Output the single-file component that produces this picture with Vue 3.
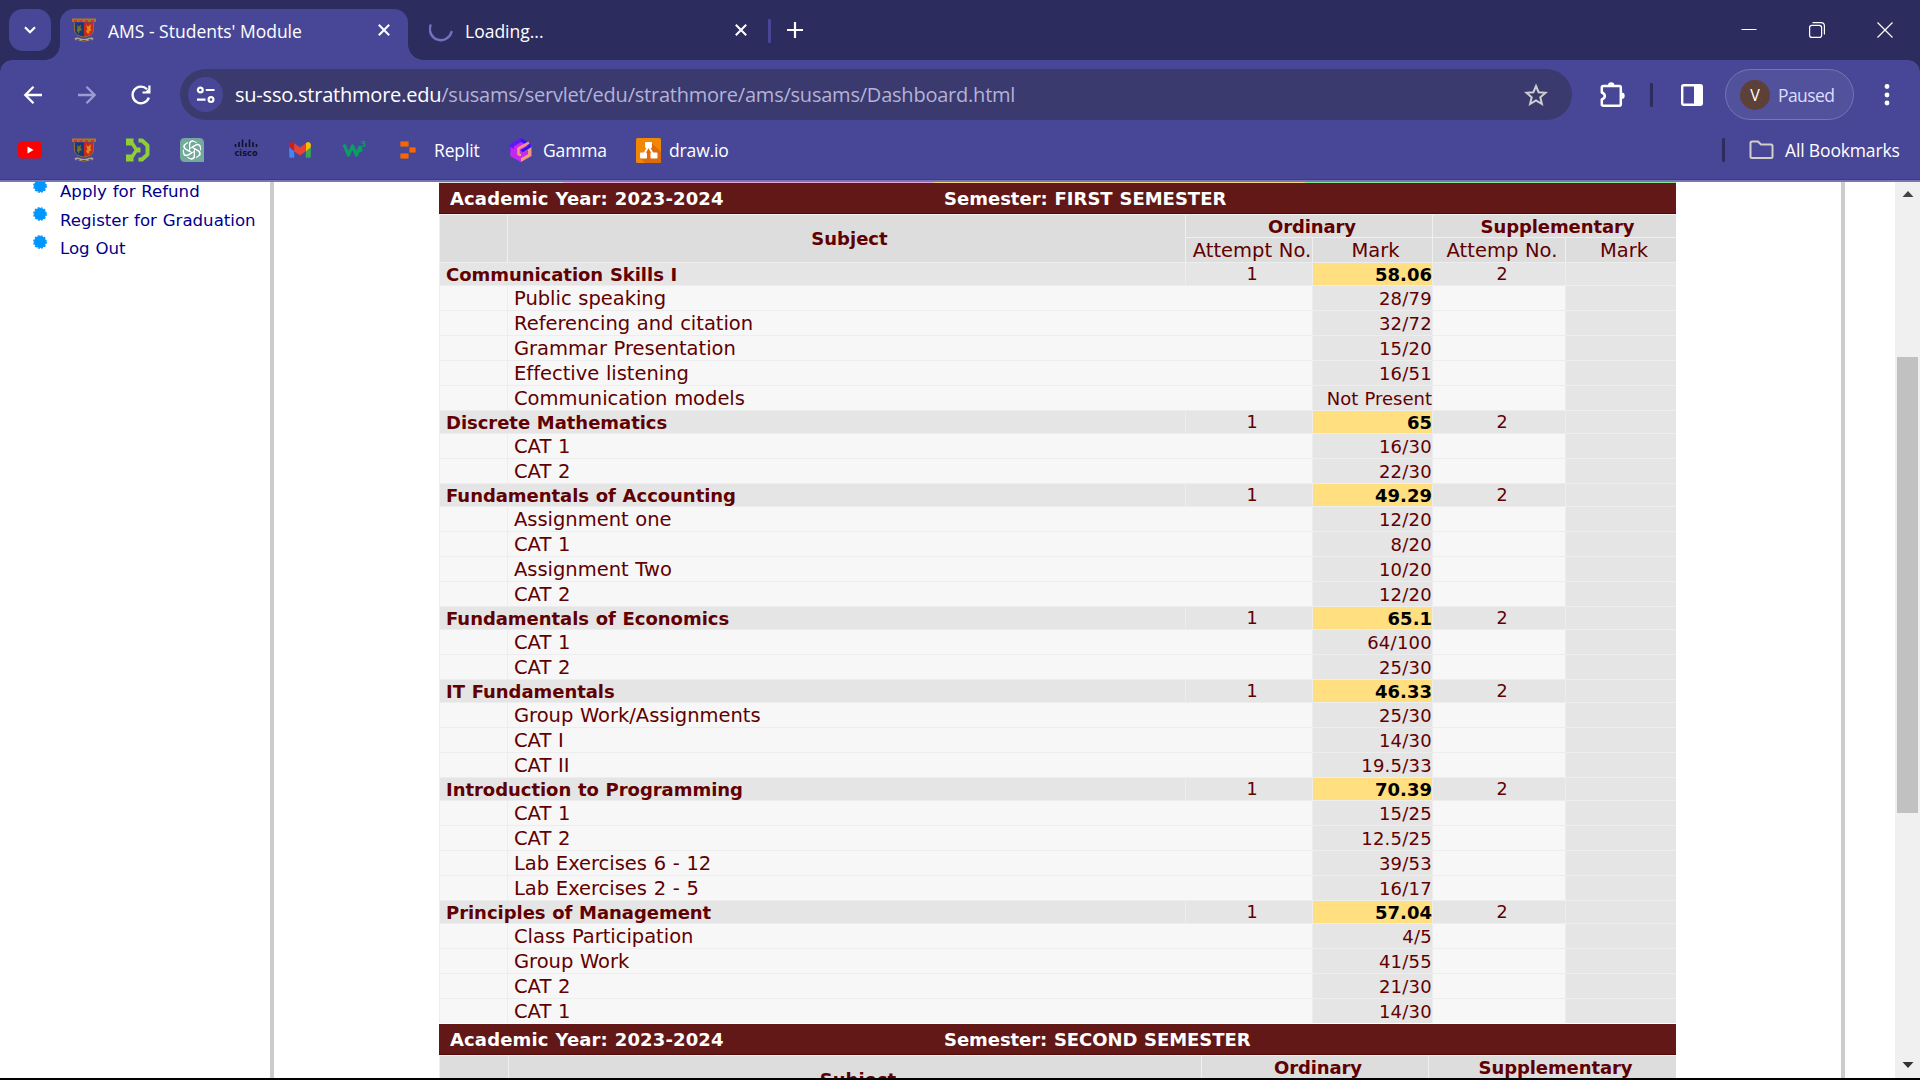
<script setup>
const subjects = [
  { name: 'Communication Skills I', mark: '58.06', parts: [['Public speaking', '28/79'], ['Referencing and citation', '32/72'], ['Grammar Presentation', '15/20'], ['Effective listening', '16/51'], ['Communication models', 'Not Present']] },
  { name: 'Discrete Mathematics', mark: '65', parts: [['CAT 1', '16/30'], ['CAT 2', '22/30']] },
  { name: 'Fundamentals of Accounting', mark: '49.29', parts: [['Assignment one', '12/20'], ['CAT 1', '8/20'], ['Assignment Two', '10/20'], ['CAT 2', '12/20']] },
  { name: 'Fundamentals of Economics', mark: '65.1', parts: [['CAT 1', '64/100'], ['CAT 2', '25/30']] },
  { name: 'IT Fundamentals', mark: '46.33', parts: [['Group Work/Assignments', '25/30'], ['CAT I', '14/30'], ['CAT II', '19.5/33']] },
  { name: 'Introduction to Programming', mark: '70.39', parts: [['CAT 1', '15/25'], ['CAT 2', '12.5/25'], ['Lab Exercises 6 - 12', '39/53'], ['Lab Exercises 2 - 5', '16/17']] },
  { name: 'Principles of Management', mark: '57.04', parts: [['Class Participation', '4/5'], ['Group Work', '41/55'], ['CAT 2', '21/30'], ['CAT 1', '14/30']] }
]
const links = ['Apply for Refund', 'Register for Graduation', 'Log Out']
</script>

<template>
  <div class="window">
    <svg width="0" height="0" class="defs">
      <symbol id="crest" viewBox="0 0 24 24">
        <path d="M0 .5h24v3.500H0z" fill="#a87a1c" />
        <path d="M2 2h3v2H2zM7.500 2h3v2h-3zM13 2h3v2h-3zM19 2h3v2h-3z" fill="#e0302a" />
        <path d="M2.500 4.500H12V19Q3 18 2.500 13z" fill="#173a7c" />
        <path d="M12 4.500h9.500V13Q21 18 12 19z" fill="#c9291d" />
        <path d="M5 7l2 1.500L9 6.500 8.500 10l1.500 2-2.500 1-.5 3-1.500-2.500L4.500 12l1-1.500z" fill="#77702c" />
        <path d="M14 7l2 1.500 3-2-.5 4 1 2-2.500 1 .5 2.500-2.500-1-1-2 1.500-1.500z" fill="#e08a1a" />
        <path d="M2.500 4.500v8.500q1 5 9.500 6 8.500-1 9.500-6V4.500" fill="none" stroke="#8a6d3c" stroke-width="1" />
        <path d="M2.500 20q3-1.200 5.500.3 4 1.200 8 0 3-1.500 5.500-.3l-1 2.200q-3-.5-4.500.5-4 1-8 0-2-1-4.500-.5z" fill="#b0a68e" />
        <path d="M4.500 21.500h3m2 1h5m2-1h3" stroke="#7c5a1a" stroke-width="1.200" />
      </symbol>
      <symbol id="cross" viewBox="0 0 12 12"><path d="M.8.8l10.400 10.400M11.200.8L.8 11.200" stroke="#fff" stroke-width="2" fill="none" /></symbol>
    </svg>

    <header class="strip">
      <button class="search"><svg width="12" height="8" viewBox="0 0 12 8"><path d="M1 1.200l5 5 5-5" fill="none" stroke="#fff" stroke-width="2.200" /></svg></button>
      <div class="tab active">
        <svg class="fav" width="24" height="24"><use href="#crest" /></svg>
        <span class="title">AMS - Students' Module</span>
        <svg class="x" width="12" height="12"><use href="#cross" /></svg>
      </div>
      <div class="tab idle">
        <svg width="24" height="24" viewBox="0 0 24 24" class="spin"><path d="M1.500 7.500A11 11 0 1 0 22.500 14" fill="none" stroke="#7472c0" stroke-width="2.400" stroke-linecap="round" /></svg>
        <span class="title">Loading...</span>
        <svg class="x" width="12" height="12"><use href="#cross" /></svg>
      </div>
      <i class="tabsep"></i>
      <svg class="plus" width="16" height="16" viewBox="0 0 16 16"><path d="M8 0v16M0 8h16" stroke="#fff" stroke-width="2.200" /></svg>
      <div class="controls">
        <svg width="16" height="16" viewBox="0 0 16 16"><path d="M.5 7.500H15.500" stroke="#fff" /></svg>
        <svg width="16" height="16" viewBox="0 0 16 16"><rect x=".6" y="3.400" width="12" height="12" rx="2.200" fill="none" stroke="#fff" stroke-width="1.200" /><path d="M3.500.6H12q3.400 0 3.400 3.400v8.500" fill="none" stroke="#fff" stroke-width="1.200" /></svg>
        <svg width="16" height="16" viewBox="0 0 16 16"><path d="M.5.5l15 15M15.500.5l-15 15" stroke="#fff" stroke-width="1.200" /></svg>
      </div>
    </header>

    <div class="chrome">
      <div class="toolbar">
        <svg class="back" width="20" height="20" viewBox="0 0 20 20"><path d="M19 10H3M10.500 1.800L2.300 10l8.200 8.200" fill="none" stroke="#fff" stroke-width="2.300" /></svg>
        <svg class="fwd" width="20" height="20" viewBox="0 0 20 20"><path d="M1 10h16M9.500 1.800l8.200 8.200-8.200 8.200" fill="none" stroke="#9c9bd2" stroke-width="2.300" /></svg>
        <svg class="reload" width="20" height="20" viewBox="0 0 20 20"><path d="M17.800 12.600A8.300 8.300 0 1 1 16 4.200" fill="none" stroke="#fff" stroke-width="2.400" /><path d="M19.500.6v8h-8v-2.200h3.200l2.600-2.600V.6z" fill="#fff" /></svg>
        <div class="omnibox">
          <span class="site"><svg width="20" height="18" viewBox="0 0 20 18"><g fill="none" stroke="#fff" stroke-width="2.200"><circle cx="4.300" cy="4" r="2.400" /><path d="M9.800 4H18.500M1 13.600h8.500" /><circle cx="15" cy="13.600" r="2.400" /></g></svg></span>
          <span class="url"><b>su-sso.strathmore.edu</b>/susams/servlet/edu/strathmore/ams/susams/Dashboard.html</span>
          <svg class="star" width="24" height="24" viewBox="0 0 24 24"><path d="M12 3l2.600 6.200 6.900.6-5.200 4.500 1.600 6.700L12 17.400 6.100 21l1.600-6.700L2.500 9.800l6.900-.6z" fill="none" stroke="#cfcfcf" stroke-width="2" /></svg>
        </div>
        <svg class="puzzle" width="26" height="26" viewBox="0 0 26 26"><path d="M2.800 5.500q0-1.500 1.500-1.500h16q1.500 0 1.500 1.500v16.800q0 1.500-1.500 1.500h-16q-1.500 0-1.500-1.500v-4.800q3-1.200 3-3.500t-3-3.500z" fill="none" stroke="#fff" stroke-width="2.500" stroke-linejoin="round" /><path d="M9 3.500a3.200 3.200 0 0 1 6.400 0zM22.500 10.500a3.200 3.200 0 0 1 0 6.400z" fill="#fff" /></svg>
        <i class="vsep"></i>
        <svg class="panel" width="24" height="24" viewBox="0 0 24 24"><rect x="2.200" y="2.200" width="19.600" height="19.600" rx="1.500" fill="none" stroke="#fff" stroke-width="2.400" /><path d="M14 2h8v20h-8z" fill="#fff" /></svg>
        <div class="profile"><span class="avatar">V</span><span class="paused">Paused</span></div>
        <svg class="dots" width="6" height="24" viewBox="0 0 6 24"><g fill="#fff"><circle cx="3" cy="3.500" r="2.400" /><circle cx="3" cy="12" r="2.400" /><circle cx="3" cy="20" r="2.400" /></g></svg>
      </div>

      <nav class="bookmarks">
        <svg width="24" height="24" viewBox="0 0 24 24"><rect y="3.500" width="24" height="17" rx="4" fill="#f00" /><path d="M9.500 8.500v7l6-3.500z" fill="#fff" /></svg>
        <svg width="24" height="24"><use href="#crest" /></svg>
        <svg width="24" height="24" viewBox="0 0 24 24"><path d="M0 .5h7.500V4l3.500 5.500h3.500v5H11L7.500 20v3.500H0v-7h5.500L8.500 12l-3-4.500H0z" fill="#8fce35" /><path d="M12.500 2.500H16l5.500 5v9l-5.500 5h-3.500" fill="none" stroke="#8fce35" stroke-width="4" stroke-linejoin="round" /></svg>
        <svg width="24" height="24" viewBox="0 0 24 24"><path d="M5 0h14q5 0 5 5v19H5q-5 0-5-5V5q0-5 5-5z" fill="#74aa9c" />
          <g fill="none" stroke="#fff" stroke-width="1.100"><path v-for="n in 6" :key="n" :transform="`rotate(${n * 60} 12 12)`" d="M9.600 13.400V7q0-3.300 3.100-3.700 2.300-.2 3.700 1.500M12 9.200l5-2.900q2.500-.4 3.700 2.200" /></g></svg>
        <svg class="cisco" width="24" height="24" viewBox="0 0 24 24"><path d="M1.500 6v3M5 4v5M8.500 1.500V9M12 5v4M15.500 1.500V9M19 4v5M22.500 6v3" stroke="#11112c" stroke-width="1.600" /><text x=".5" y="17.500" font-size="9.500" textLength="23" lengthAdjust="spacingAndGlyphs" fill="#11112c">cisco</text></svg>
        <svg width="24" height="24" viewBox="0 0 24 24"><path d="M1.200 6v12.500q0 1.300 1.300 1.300h3.700V9.500z" fill="#4285f4" /><path d="M22.800 6v12.500q0 1.300-1.300 1.300h-3.700V9.500z" fill="#34a853" /><path d="M17.800 5.200q3-2.600 5 .8v3.300l-5 4z" fill="#fbbc04" /><path d="M6.200 5.200q-3-2.600-5 .8v3.300l5 4z" fill="#c5221f" /><path d="M6.200 5.200L12 9.600l5.800-4.400v8.100L12 17.600l-5.800-4.300z" fill="#ea4335" /></svg>
        <svg class="w3" width="24" height="24" viewBox="0 0 24 24"><path d="M2 6.500L6.500 17 10.500 8 14.500 17 17.800 9.500 19.500 13.500" fill="none" stroke="#0a9e62" stroke-width="3.200" stroke-linejoin="round" /><text x="19" y="8.500" font-size="8.500" fill="#0a9e62">3</text></svg>
        <svg width="24" height="24" viewBox="0 0 24 24"><path d="M5 3h8v6H5q-1 0-1-1V4q0-1 1-1zM13 9h6q1 0 1 1v4q0 1-1 1h-6zM4 16q0-1 1-1h8v5q0 1-1 1H5q-1 0-1-1z" fill="#fb6400" stroke="#2c4c9c" stroke-width=".7" /></svg>
        <span class="bm replit">Replit</span>
        <svg class="gamma" width="24" height="24" viewBox="0 0 24 24"><path d="M12 0l10.500 6v12L12 24 1.500 18V6z" fill="#c529f0" /><path d="M12 0L22.500 6v12L12 24V20l7-4v-4l-5 3v-4l5-3-7-4.300L5 8v8L1.500 14V6z" fill="#3113f4" /><path d="M1.500 6L12 0v4L5 8v8.500L1.500 14.500z" fill="#5a1cf5" /><path d="M14 11l8.500-4.700V18L12 24v-4l7-4v-4l-5 3z" fill="#f0977c" /><path d="M20 4.600L9.500 10.500v5.500L12 17.500" fill="none" stroke="#f0977c" stroke-width="2.600" /><path d="M11.500 12l11-6v3L14 14.500z" fill="#3113f4" /><path d="M1.500 9l3.500 2v5.500L12 20v4L1.500 18z" fill="#c529f0" /></svg>
        <span class="bm gtext">Gamma</span>
        <svg class="drawio" width="25" height="25" viewBox="0 0 25 25"><rect width="25" height="25" rx="1.500" fill="#f08705" /><path d="M15 4.500L25 14v9.500q0 1.500-1.500 1.500H9l-5-5 8-8z" fill="#df6c0c" /><path d="M12 9l-5 9M13 9l5 9" stroke="#fff" stroke-width="1.800" /><rect x="9" y="4" width="7" height="6" rx="1" fill="#fff" /><rect x="4" y="14.500" width="7" height="6" rx="1" fill="#fff" /><rect x="14.500" y="14.500" width="7" height="6" rx="1" fill="#fff" /></svg>
        <span class="bm">draw.io</span>
        <i class="vsep bsep"></i>
        <svg class="folder" width="25" height="20" viewBox="0 0 25 20"><path d="M1.500 3q0-1.500 1.500-1.500h6l3 3h10q1.500 0 1.500 1.500v10.500q0 1.500-1.500 1.500H3q-1.500 0-1.500-1.500z" fill="none" stroke="#d0d0c8" stroke-width="2" /></svg>
        <span class="bm all">All Bookmarks</span>
      </nav>
    </div>

    <div class="page">
      <aside>
        <div v-for="l in links" :key="l" class="link">
          <svg width="14" height="14" viewBox="0 0 14 14"><circle cx="7" cy="7" r="6" fill="#0096ff" /><circle cx="7" cy="7" r="6.200" fill="none" stroke="#0096ff" stroke-width="1.400" stroke-dasharray="1.950 1.300" /></svg>
          <a>{{ l }}</a>
        </div>
      </aside>
      <i class="rule"></i>
      <main>
        <div class="accent"><i></i><i></i><i></i><i></i></div>
        <div class="banner"><span>Academic Year: 2023-2024</span><span>Semester: FIRST SEMESTER</span></div>
        <div class="head">
          <div></div><div class="h subj">Subject</div>
          <div class="h wide">Ordinary</div><div class="h wide">Supplementary</div>
          <div class="c">Attempt No.</div><div class="c">Mark</div><div class="c">Attemp No.</div><div class="c">Mark</div>
        </div>
        <template v-for="s in subjects" :key="s.name">
          <div class="row subject">
            <div class="name">{{ s.name }}</div><div class="no">1</div><div class="gold">{{ s.mark }}</div><div class="no">2</div><div></div>
          </div>
          <div v-for="p in s.parts" :key="p[0]" class="row part">
            <div></div><div class="label">{{ p[0] }}</div><div class="mark" :class="{ absent: !p[1].includes('/') }">{{ p[1] }}</div><div></div><div class="shade"></div>
          </div>
        </template>
        <div class="banner second"><span>Academic Year: 2023-2024</span><span>Semester: SECOND SEMESTER</span></div>
        <div class="head next">
          <div></div><div class="h subj">Subject</div>
          <div class="h wide">Ordinary</div><div class="h wide">Supplementary</div>
        </div>
      </main>
      <i class="rule"></i>
      <div class="scroll">
        <svg width="12" height="6" viewBox="0 0 12 6"><path d="M.5 6L6 0l5.500 6z" fill="#444" /></svg>
        <i class="thumb"></i>
        <svg class="down" width="12" height="6" viewBox="0 0 12 6"><path d="M.5 0L6 6l5.500-6z" fill="#333" /></svg>
      </div>
    </div>
  </div>
</template>

<style>
body { background: #000; overflow: hidden; }
</style>

<style scoped>
* { box-sizing: border-box; }
svg { display: block; flex: none; }
.defs { position: absolute; }
.window { width: 1920px; height: 1080px; overflow: hidden; display: flex; flex-direction: column; background: #000; font-family: "Open Sans", "Noto Sans", sans-serif; font-size: 17.5px; color: #fff; white-space: nowrap; }
.strip { height: 60px; flex: none; background: #2d2c5e; display: flex; align-items: flex-end; }
.search { width: 42px; height: 42px; margin: 0 9px 9px; padding: 0; border: 0; border-radius: 14px; background: #484797; display: flex; align-items: center; justify-content: center; }
.tab { height: 51px; display: flex; align-items: center; padding-bottom: 9px; }
.active { width: 348px; background: #484797; border-radius: 14px 14px 0 0; position: relative; padding-left: 12px; }
.active::before, .active::after { content: ""; position: absolute; bottom: 0; width: 15px; height: 15px; }
.active::before { left: -15px; background: radial-gradient(circle at 0 0, transparent 14.500px, #484797 15px); }
.active::after { right: -15px; background: radial-gradient(circle at 100% 0, transparent 14.500px, #484797 15px); }
.title { line-height: 24px; margin-left: 12px; padding-top: 1px; }
.x { margin-left: auto; margin-right: 18px; }
.idle { width: 356px; padding-left: 21px; }
.idle .x { margin-right: 17px; }
.tabsep { width: 3px; height: 24px; border-radius: 1px; background: #484797; margin: 0 16px 17px 4px; }
.plus { margin-bottom: 22px; }
.controls { margin: 0 27px 22px auto; display: flex; gap: 52px; }

.chrome { height: 122px; flex: none; background: linear-gradient(#484797 119px, #3c3b85 119px, #3c3b85 120px, #7675b5 120px); position: relative; }
.chrome::before { content: ""; position: absolute; inset: 0 0 auto; height: 12px; background: radial-gradient(circle at 12px 12px, transparent 11.500px, #2d2c5e 12px) 0 0 / 12px 12px no-repeat, radial-gradient(circle at 0 12px, transparent 11.500px, #2d2c5e 12px) 100% 0 / 12px 12px no-repeat; }
.toolbar { height: 69px; display: flex; align-items: center; position: relative; }
.back { margin-left: 23px; }
.fwd { margin-left: 34px; }
.reload { margin-left: 34px; }
.omnibox { width: 1392px; height: 51px; margin-left: 29px; border-radius: 26px; background: #3b3a6e; display: flex; align-items: center; }
.site { width: 35px; height: 35px; margin-left: 8px; border-radius: 50%; background: #484797; display: flex; align-items: center; justify-content: center; }
.url { font-size: 20px; letter-spacing: -.22px; line-height: 28px; margin-left: 12px; color: #b3b2d8; }
.url b { font-weight: 400; color: #fff; }
.star { margin: 0 24px 0 auto; }
.puzzle { margin-left: 27px; }
.vsep { width: 3px; height: 24px; border-radius: 1px; background: #2d2c5e; }
.toolbar .vsep { margin-left: 25px; }
.panel { margin-left: 27px; }
.profile { width: 129px; height: 51px; margin-left: 21px; border: 1.500px solid #7675b5; border-radius: 26px; background: #52529c; display: flex; align-items: center; padding-left: 14px; }
.avatar { width: 30px; height: 30px; border-radius: 50%; background: #5d4037; line-height: 30px; text-align: center; font-size: 16px; }
.paused { margin-left: 8px; letter-spacing: -.6px; color: #dcdcff; }
.dots { margin-left: 30px; }
.bookmarks { height: 24px; margin-top: 9px; padding-left: 18px; display: flex; align-items: center; gap: 30px; position: relative; }
.bm { line-height: 24px; letter-spacing: -.15px; padding-bottom: 1px; }
.cisco, .w3 { overflow: visible; }
.cisco text { font-family: "DejaVu Sans", sans-serif; font-weight: 700; }
.w3 text { font-weight: 700; }
.replit { margin-left: -16px; width: 46px; }
.gamma { margin-left: -1px; }
.gtext { margin-left: -20px; width: 63px; }
.drawio + .bm { margin-left: -22px; }
.bsep { margin-left: auto; margin-right: -6px; }
.folder { margin-right: -19px; }
.all { width: 135px; }

.page { height: 896px; flex: none; background: #fff; display: flex; overflow: hidden; font-family: "DejaVu Sans", Verdana, sans-serif; word-spacing: .03em; color: #600000; }
aside { width: 270px; }
.link { height: 28px; display: flex; padding-left: 33px; }
.link:first-child { height: 27px; margin-top: -2px; }
.link:nth-child(2) { margin-top: 1px; }
.link a { font-size: 16.600px; color: #00008b; margin-left: 13px; line-height: 24px; }
.link:nth-child(n+2) a { line-height: 26px; }
.link svg { margin-top: -1px; }
.rule { width: 4px; flex: none; background: #ccc; }
main { width: 1567px; padding-left: 165px; }
.accent { height: 1px; width: 1237px; display: grid; grid-template-columns: 124px 371px 371px 371px; }
.accent i:nth-child(1) { background: #ddd; }
.accent i:nth-child(2) { background: #e9a6dc; }
.accent i:nth-child(3) { background: #f5d77c; }
.accent i:nth-child(4) { background: #8fe58f; }
.banner { width: 1237px; height: 31px; background: #621817; border-bottom: 1px solid #500808; color: #fff; font-weight: 700; font-size: 18px; letter-spacing: .13px; line-height: 32px; display: flex; padding-left: 11px; }
.banner span:first-child { width: 494px; }
.banner span:last-child { letter-spacing: 0; }
.second span:last-child { letter-spacing: -.06px; }
.head { width: 1237px; height: 48px; display: grid; grid-template-columns: 68px 678px 127px 120px 133px 111px; grid-template-rows: 23px 25px; border-right: 1px solid #eee; }
.head > div { border: solid #f0f0f0; border-width: 1px 0 0 1px; background: #ddd; text-align: center; }
.head > div:nth-child(1), .head > div:nth-child(2) { grid-row: span 2; }
.h { font-weight: 700; font-size: 18px; line-height: 23px; letter-spacing: -.1px; }
.head .subj { line-height: 47px; padding-left: 6px; letter-spacing: 0; }
.wide { grid-column: span 2; }
.head .wide { padding-left: 6px; }
.c { font-size: 19.500px; line-height: 26px; padding-left: 6px; height: 25px; }
.row { width: 1237px; display: grid; border-right: 1px solid #eee; }
.row > div { border: solid #ededed; border-width: 1px 0 0 1px; }
.subject { height: 23px; grid-template-columns: 746px 127px 120px 133px 111px; }
.subject > div { background: #e5e5e5; line-height: 23px; height: 23px; font-size: 18px; }
.subject .name { font-weight: 700; padding-left: 6px; letter-spacing: -.04px; }
.subject .no { text-align: center; padding-left: 6px; font-size: 17.500px; }
.subject .gold { background: #ffdf80; color: #000; font-weight: 700; text-align: right; }
.part { height: 25px; grid-template-columns: 68px 805px 120px 133px 111px; }
.part > div { background: #f7f7f7; line-height: 26px; height: 25px; }
.label { font-size: 19.500px; padding-left: 6px; letter-spacing: -.02px; }
.part .mark { font-size: 18px; text-align: right; background: #e5e5e5; letter-spacing: .25px; }
.part .absent { letter-spacing: 0; }
.part .shade { background: #e5e5e5; }
.second { margin-top: 1px; }
.next { grid-template-columns: 69px 693px 227px 248px; }
.next .wide { grid-column: auto; }
.scroll { width: 75px; padding-left: 50px; background: linear-gradient(90deg, #fff 50px, #f0f0f0 50px); display: flex; flex-direction: column; align-items: center; }
.scroll svg:first-child { margin-top: 9px; }
.thumb { width: 21px; height: 456px; margin-top: 160px; background: #c1c1c1; }
.down { margin-top: 249px; }
</style>
